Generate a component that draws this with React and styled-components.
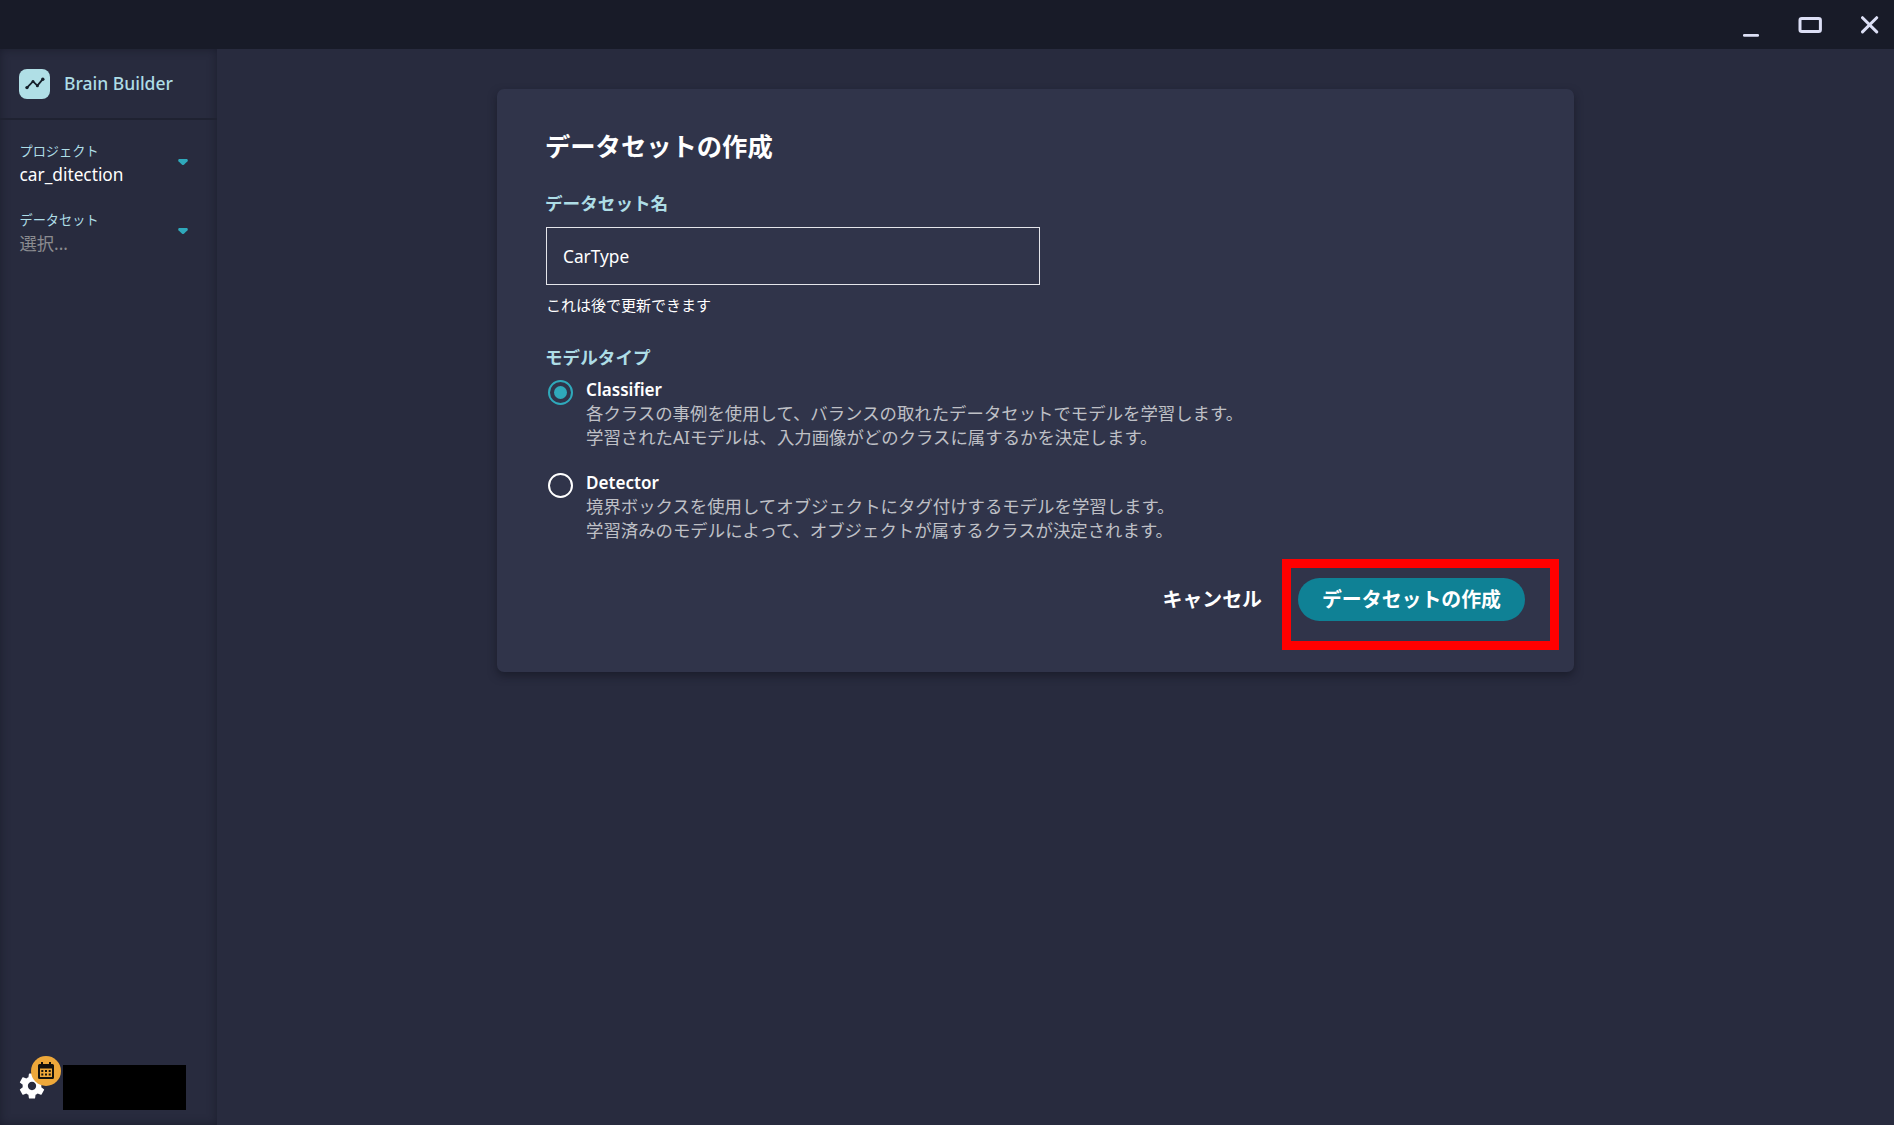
import React, { useState } from 'react';
import styled, { createGlobalStyle } from 'styled-components';

const options = [
  {
    id: 'classifier',
    title: 'Classifier',
    lines: [
      '各クラスの事例を使用して、バランスの取れたデータセットでモデルを学習します。',
      '学習されたAIモデルは、入力画像がどのクラスに属するかを決定します。',
    ],
  },
  {
    id: 'detector',
    title: 'Detector',
    lines: [
      '境界ボックスを使用してオブジェクトにタグ付けするモデルを学習します。',
      '学習済みのモデルによって、オブジェクトが属するクラスが決定されます。',
    ],
  },
];

const Caret = () => (
  <svg width="10" height="6" viewBox="0 0 10 6">
    <path d="M1.4 0h7.2c1 0 1.6 1.4.9 2.2L6.2 5.5a1.7 1.7 0 0 1-2.4 0L.5 2.2C-.2 1.4.4 0 1.4 0z" fill="#2fa9bb" />
  </svg>
);

const App = () => {
  const [model, setModel] = useState('classifier');
  const [name, setName] = useState('CarType');

  return (
    <>
      <GlobalStyle />
      <Window>
        <TitleBar>
          <svg width="16" height="24" viewBox="0 0 16 24">
            <path d="M1.3 22.3h13.4" stroke="#dcdff5" strokeWidth="2.8" strokeLinecap="round" />
          </svg>
          <svg width="24" height="24" viewBox="0 0 24 24">
            <rect x="2" y="5.5" width="20.4" height="13" rx="1.8" fill="none" stroke="#dcdff5" strokeWidth="3" />
          </svg>
          <svg width="18" height="24" viewBox="0 0 18 24">
            <path d="M1.5 4.7l14.2 14.2M15.7 4.7L1.5 18.9" stroke="#dcdff5" strokeWidth="3" strokeLinecap="round" />
          </svg>
        </TitleBar>
        <Body>
          <Sidebar>
            <Brand>
              <Logo>
                <svg width="20" height="13" viewBox="0 0 20 13">
                  <path d="M2 10.6l6-6.2 4.4 4.2 5.4-6.4" fill="none" stroke="#16202b" strokeWidth="1.8" />
                  <g fill="#16202b">
                    <circle cx="2" cy="10.6" r="1.7" />
                    <circle cx="8" cy="4.4" r="1.5" />
                    <circle cx="12.4" cy="8.8" r="1.5" />
                    <circle cx="17.8" cy="2.2" r="1.7" />
                  </g>
                </svg>
              </Logo>
              <BrandName>Brain Builder</BrandName>
            </Brand>
            <Picker>
              <div>
                <PickerLabel>プロジェクト</PickerLabel>
                <PickerValue>car_ditection</PickerValue>
              </div>
              <Caret />
            </Picker>
            <Picker>
              <div>
                <PickerLabel>データセット</PickerLabel>
                <PickerValue $empty>選択...</PickerValue>
              </div>
              <Caret />
            </Picker>
            <Account>
              <Settings>
                <svg width="26" height="26" viewBox="2.2 2 19.6 20">
                  <path
                    fill="#fff"
                    d="M19.14 12.94c.04-.3.06-.61.06-.94 0-.32-.02-.64-.07-.94l2.03-1.58a.49.49 0 0 0 .12-.61l-1.92-3.32a.488.488 0 0 0-.59-.22l-2.39.96c-.5-.38-1.03-.7-1.62-.94l-.36-2.54a.484.484 0 0 0-.48-.41h-3.84c-.24 0-.43.17-.47.41l-.36 2.54c-.59.24-1.13.57-1.62.94l-2.39-.96c-.22-.08-.47 0-.59.22L2.74 8.87c-.12.21-.08.47.12.61l2.03 1.58c-.05.3-.09.63-.09.94s.02.64.07.94l-2.03 1.58a.49.49 0 0 0-.12.61l1.92 3.32c.12.22.37.29.59.22l2.39-.96c.5.38 1.03.7 1.62.94l.36 2.54c.05.24.24.41.48.41h3.84c.24 0 .44-.17.47-.41l.36-2.54c.59-.24 1.13-.56 1.62-.94l2.39.96c.22.08.47 0 .59-.22l1.92-3.32c.12-.22.07-.47-.12-.61l-2.01-1.58zM12 15.2c-1.76 0-3.2-1.44-3.2-3.2s1.44-3.2 3.2-3.2 3.2 1.44 3.2 3.2-1.44 3.2-3.2 3.2z"
                  />
                </svg>
                <Badge>
                  <svg width="16" height="17" viewBox="0 0 16 17">
                    <path d="M3 0h2v2h6V0h2v2h1.5A1.5 1.5 0 0 1 16 3.5v12a1.5 1.5 0 0 1-1.5 1.5h-13A1.5 1.5 0 0 1 0 15.5v-12A1.5 1.5 0 0 1 1.5 2H3z" fill="#15120c" />
                    <path d="M2 6.5h12V15H2z" fill="#eea83a" />
                    <path d="M3.3 8h2v2h-2zM7 8h2v2H7zM10.7 8h2v2h-2zM3.3 11.500h2v2h-2zM7 11.500h2v2H7zM10.7 11.500h2v2h-2z" fill="#15120c" />
                  </svg>
                </Badge>
              </Settings>
              <AccountName />
            </Account>
          </Sidebar>
          <Main>
            <Card>
              <Heading>データセットの作成</Heading>
              <Label htmlFor="name">データセット名</Label>
              <Input id="name" value={name} onChange={(e) => setName(e.target.value)} />
              <Hint>これは後で更新できます</Hint>
              <Label as="div">モデルタイプ</Label>
              <Options>
                {options.map((o) => (
                  <Option key={o.id} onClick={() => setModel(o.id)}>
                    <Radio $checked={model === o.id} />
                    <div>
                      <OptionTitle>{o.title}</OptionTitle>
                      {o.lines.map((line) => (
                        <OptionText key={line}>{line}</OptionText>
                      ))}
                    </div>
                  </Option>
                ))}
              </Options>
              <Actions>
                <Button>キャンセル</Button>
                <Button $primary>データセットの作成</Button>
                <Highlight />
              </Actions>
            </Card>
          </Main>
        </Body>
      </Window>
    </>
  );
};

const GlobalStyle = createGlobalStyle`
  * {
    box-sizing: border-box;
  }

  body {
    margin: 0;
    background: #282b3e;
    color: #fff;
    font-family: 'Noto Sans', 'Noto Sans CJK JP', sans-serif;
    font-size: 17.3px;
  }

  svg {
    display: block;
    flex-shrink: 0;
  }
`;

const Window = styled.div`
  display: flex;
  flex-direction: column;
  height: 100vh;
  overflow: hidden;
`;

const TitleBar = styled.header`
  display: flex;
  justify-content: flex-end;
  align-items: center;
  gap: 39px;
  flex: 0 0 49px;
  padding-right: 15px;
  background: #181b28;
`;

const Body = styled.div`
  display: flex;
  flex: 1;
  min-height: 0;
`;

const Sidebar = styled.aside`
  display: flex;
  flex-direction: column;
  flex: 0 0 217px;
  box-shadow: inset 0 0 10px rgba(16, 18, 30, 0.5);
`;

const Brand = styled.div`
  display: flex;
  align-items: center;
  gap: 14px;
  height: 71px;
  padding: 0 0 0 19px;
  margin-bottom: 20px;
  border-bottom: 2px solid #1f2231;
`;

const BrandName = styled.span`
  padding-bottom: 2px;
  color: #aedde6;
  font-size: 17.5px;
  font-weight: 500;
`;

const Logo = styled.span`
  display: flex;
  align-items: center;
  justify-content: center;
  width: 31px;
  height: 30px;
  border-radius: 8px;
  background: #b0dfe6;
`;

const Picker = styled.div`
  display: flex;
  justify-content: space-between;
  align-items: center;
  height: 45px;
  margin-bottom: 24px;
  padding: 0 29px 0 19.5px;

  > svg {
    margin-bottom: 2px;
  }
`;

const PickerLabel = styled.div`
  padding-top: 2px;
  font-size: 13.2px;
  line-height: 21px;
  color: #aedde6;
`;

const PickerValue = styled.div`
  line-height: 25px;
  color: ${({ $empty }) => ($empty ? '#8b8b90' : '#fff')};
`;

const Account = styled.div`
  display: flex;
  align-items: flex-end;
  gap: 18px;
  margin-top: auto;
  padding: 0 0 15px 19px;
`;

const Settings = styled.div`
  position: relative;
  padding-bottom: 11px;
`;

const Badge = styled.span`
  position: absolute;
  left: 11.5px;
  top: -17.5px;
  display: flex;
  align-items: center;
  justify-content: center;
  width: 30px;
  height: 30px;
  border-radius: 50%;
  background: #eea83a;
`;

const AccountName = styled.div`
  width: 123px;
  height: 45px;
  background: #000;
`;

const Main = styled.main`
  flex: 1;
  padding: 40px 320px 0 280px;
`;

const Card = styled.section`
  height: 583px;
  padding: 38px 49px 0;
  border-radius: 7px;
  background: #30344a;
  box-shadow: 0 4px 8px rgba(16, 18, 30, 0.55);
`;

const Heading = styled.h1`
  margin: 0 0 26px -1px;
  font-size: 25.3px;
  line-height: 38px;
  font-weight: 700;
`;

const Label = styled.label`
  display: block;
  margin-left: -1px;
  padding-top: 1px;
  font-size: 17.6px;
  line-height: 23px;
  font-weight: 600;
  color: #aedde6;
`;

const Input = styled.input`
  display: block;
  width: 494px;
  height: 58px;
  margin: 12px 0 10px;
  padding: 0 16px;
  border: 1px solid #e4e5ea;
  border-radius: 0;
  outline: 0;
  background: transparent;
  color: #fff;
  font: inherit;
`;

const Hint = styled.p`
  margin: 0 0 30px;
  font-size: 15px;
  line-height: 20px;
`;

const Options = styled.div`
  display: grid;
  gap: 23px;
  margin-top: 10px;
`;

const Option = styled.div`
  display: flex;
  gap: 13px;
  padding-left: 2px;
`;

const Radio = styled.span`
  flex: 0 0 25px;
  height: 25px;
  margin-top: 1px;
  border: 2px solid ${({ $checked }) => ($checked ? '#2fa9bb' : '#fff')};
  border-radius: 50%;
  background: ${({ $checked }) => ($checked ? '#2fa9bb' : 'transparent')} content-box;
  padding: 4px;
`;

const OptionTitle = styled.div`
  font-size: 17.1px;
  line-height: 22px;
  font-weight: 600;
`;

const OptionText = styled.div`
  font-size: 17.4px;
  line-height: 24px;
  color: #bfc0c6;
`;

const Actions = styled.div`
  position: relative;
  display: flex;
  justify-content: flex-end;
  gap: 12px;
  margin-top: 36px;
`;

const Button = styled.button`
  height: 43px;
  padding: 0 24px 2px;
  border: 0;
  border-radius: 22px;
  background: ${({ $primary }) => ($primary ? '#0f8195' : 'transparent')};
  color: #fff;
  font: inherit;
  font-size: 19.9px;
  font-weight: 700;
`;

const Highlight = styled.div`
  position: absolute;
  right: -34px;
  top: -19px;
  width: 277px;
  height: 91px;
  border: 9px solid #f00;
  pointer-events: none;
`;

export default App;
